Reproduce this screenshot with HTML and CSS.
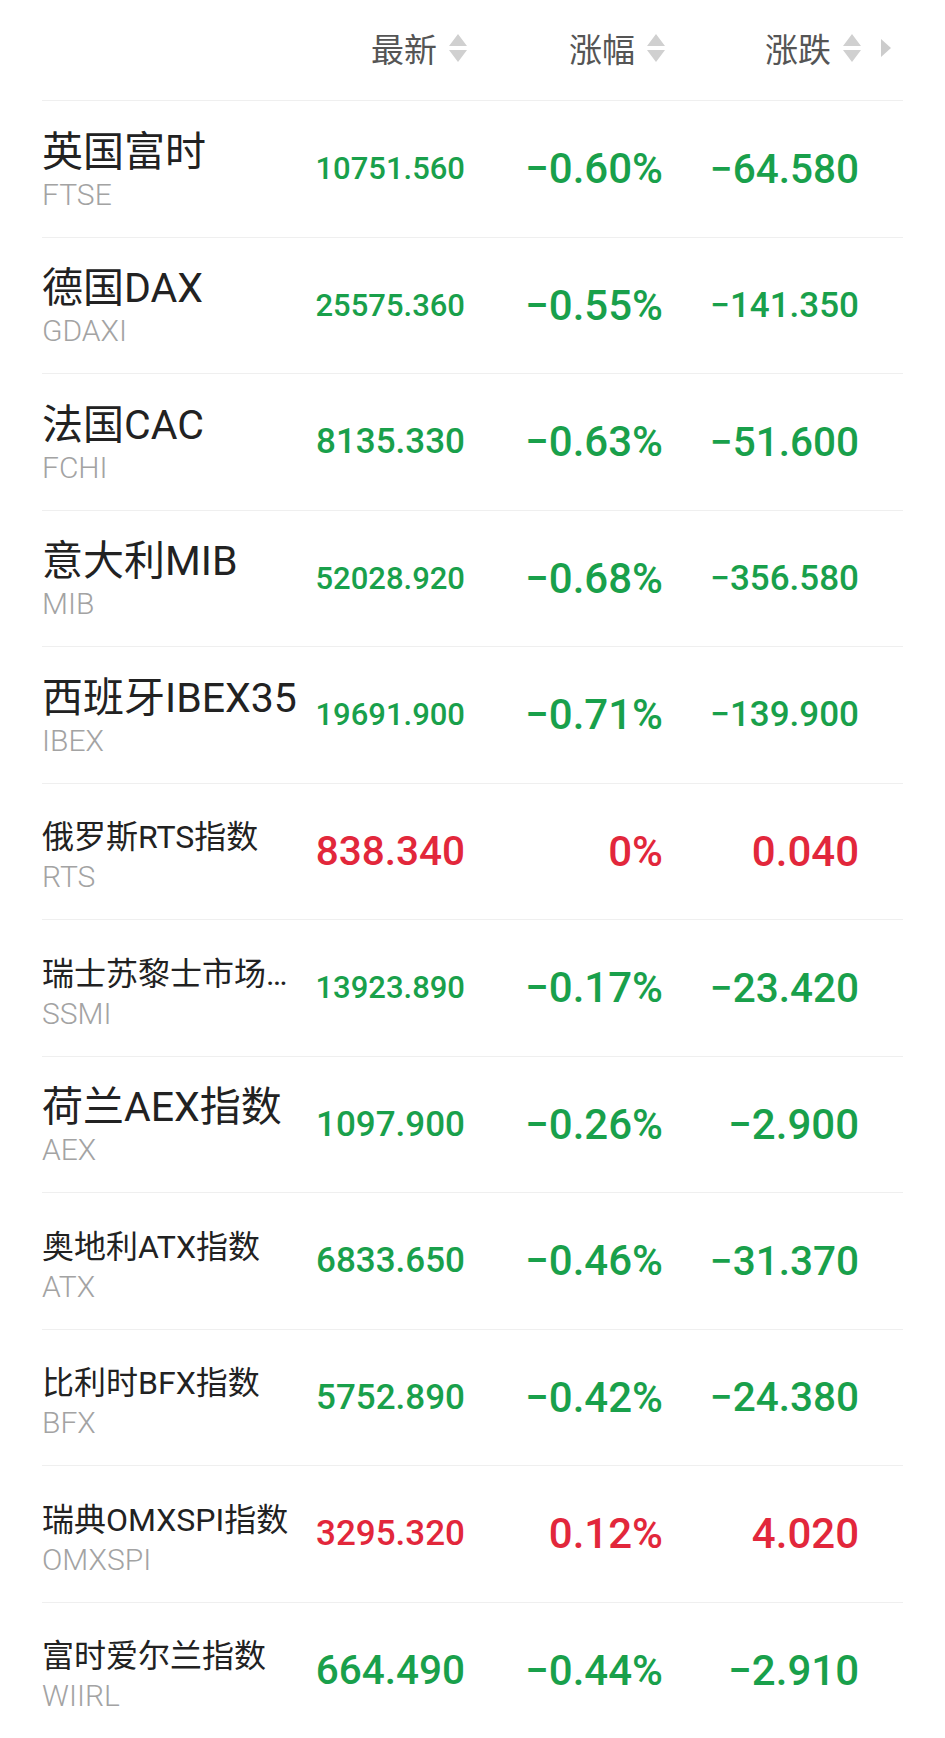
FILE: index.html
```html
<!DOCTYPE html>
<html lang="zh-CN">

<head>
    <meta charset="UTF-8">
    <meta name="viewport" content="width=device-width, initial-scale=1.0">
    <title>欧洲股指</title>
    <link rel="stylesheet" href="styles.css">
</head>

<body>
    <div class="quotes">
        <div class="quotes-head">
            <div></div>
            <div class="sort-cell">
                <span>最新</span>
                <svg class="sort-icon" viewBox="0 0 18 28" width="18" height="28"><path d="M9 0 L18 12 L0 12 Z M0 16 L18 16 L9 28 Z"/></svg>
            </div>
            <div class="sort-cell">
                <span>涨幅</span>
                <svg class="sort-icon" viewBox="0 0 18 28" width="18" height="28"><path d="M9 0 L18 12 L0 12 Z M0 16 L18 16 L9 28 Z"/></svg>
            </div>
            <div class="sort-cell">
                <span>涨跌</span>
                <svg class="sort-icon" viewBox="0 0 18 28" width="18" height="28"><path d="M9 0 L18 12 L0 12 Z M0 16 L18 16 L9 28 Z"/></svg>
            </div>
            <div class="more-cell">
                <svg class="more-icon" viewBox="0 0 10 18" width="10" height="18"><path d="M0 0 L10 9 L0 18 Z"/></svg>
            </div>
        </div>

        <div id="rows"></div>
    </div>

    <script>
        const indices = [
            { name: '英国富时', code: 'FTSE', last: '10751.560', pct: '−0.60%', chg: '−64.580', up: false },
            { name: '德国DAX', code: 'GDAXI', last: '25575.360', pct: '−0.55%', chg: '−141.350', up: false },
            { name: '法国CAC', code: 'FCHI', last: '8135.330', pct: '−0.63%', chg: '−51.600', up: false },
            { name: '意大利MIB', code: 'MIB', last: '52028.920', pct: '−0.68%', chg: '−356.580', up: false },
            { name: '西班牙IBEX35', code: 'IBEX', last: '19691.900', pct: '−0.71%', chg: '−139.900', up: false },
            { name: '俄罗斯RTS指数', code: 'RTS', last: '838.340', pct: '0%', chg: '0.040', up: true },
            { name: '瑞士苏黎士市场指数', code: 'SSMI', last: '13923.890', pct: '−0.17%', chg: '−23.420', up: false },
            { name: '荷兰AEX指数', code: 'AEX', last: '1097.900', pct: '−0.26%', chg: '−2.900', up: false },
            { name: '奥地利ATX指数', code: 'ATX', last: '6833.650', pct: '−0.46%', chg: '−31.370', up: false },
            { name: '比利时BFX指数', code: 'BFX', last: '5752.890', pct: '−0.42%', chg: '−24.380', up: false },
            { name: '瑞典OMXSPI指数', code: 'OMXSPI', last: '3295.320', pct: '0.12%', chg: '4.020', up: true },
            { name: '富时爱尔兰指数', code: 'WIIRL', last: '664.490', pct: '−0.44%', chg: '−2.910', up: false }
        ];

        function renderRows() {
            const container = document.getElementById('rows');

            indices.forEach(item => {
                const row = document.createElement('div');
                row.className = 'quote-row ' + (item.up ? 'up' : 'down');
                row.innerHTML = `
                    <div class="title">
                        <div class="name">${item.name}</div>
                        <div class="code">${item.code}</div>
                    </div>
                    <div class="val">${item.last}</div>
                    <div class="val">${item.pct}</div>
                    <div class="val">${item.chg}</div>
                `;
                container.appendChild(row);
            });
        }

        // long names drop to the small size, numbers shrink until they fit
        function fitText() {
            document.querySelectorAll('.name').forEach(el => {
                if (el.scrollWidth > el.clientWidth) {
                    el.classList.add('small');
                }
            });

            document.querySelectorAll('.val').forEach(el => {
                let size = 42;
                while (el.scrollWidth > el.clientWidth && size > 20) {
                    size -= 0.5;
                    el.style.fontSize = size + 'px';
                }
            });
        }

        renderRows();
        fitText();
    </script>
</body>

</html>
```

FILE: styles.css
```css
body {
    margin: 0;
    padding: 0;
    background-color: #ffffff;
    font-family: Roboto, "Noto Sans CJK SC", sans-serif;
    color: #222;
}

.quotes {
    padding: 0 42px;
}

.quotes-head,
.quote-row {
    display: grid;
    grid-template-columns: 1fr 150px 198px 196px 44px;
    align-items: center;
    border-bottom: 1px solid #efefef;
    box-sizing: border-box;
}

.quotes-head {
    height: 101px;
    padding-bottom: 4px;
}

.sort-cell {
    display: flex;
    justify-content: flex-end;
    align-items: center;
    gap: 12px;
    font-family: "Noto Sans CJK SC", sans-serif;
    font-size: 33px;
    color: #555;
    margin-right: -2px;
}

.sort-icon {
    fill: #d0d0d0;
}

.more-cell {
    display: flex;
    justify-content: flex-end;
    padding-right: 12px;
}

.more-icon {
    fill: #cccccc;
}

.quote-row {
    height: 136.5px;
}

.title {
    min-width: 0;
}

.name {
    max-width: 268px;
    font-size: 41px;
    line-height: 50px;
    height: 50px;
    padding-top: 2px;
    white-space: nowrap;
    overflow: hidden;
    text-overflow: ellipsis;
    color: #222;
}

.name.small {
    font-size: 32px;
    line-height: 44px;
    height: 44px;
    padding-top: 8px;
}

.code {
    font-size: 30px;
    line-height: 36px;
    font-weight: 300;
    color: #a3a3a3;
}

.val {
    justify-self: end;
    width: 150px;
    text-align: right;
    white-space: nowrap;
    overflow: hidden;
    font-size: 42px;
    font-weight: 500;
}

.down .val {
    color: #19a04b;
}

.up .val {
    color: #e2273b;
}
```
